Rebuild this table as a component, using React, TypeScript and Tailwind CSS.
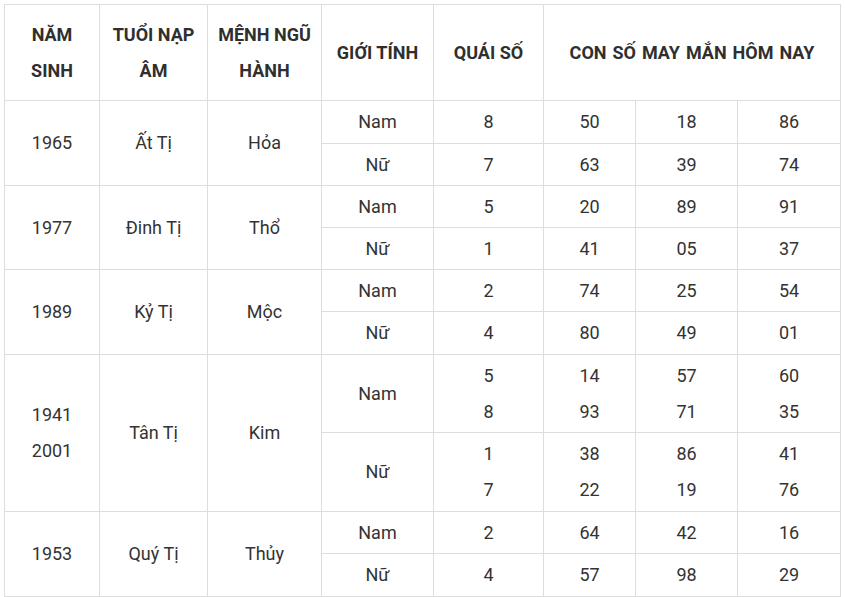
import React from "react";

type Sub = { g: string; q: string[]; n: string[][]; h: string };
type Row = { years: string[]; tuoi: string; menh: string; subs: Sub[] };

const rows: Row[] = [
  { years: ["1965"], tuoi: "Ất Tị", menh: "Hỏa", subs: [
    { g: "Nam", q: ["8"], n: [["50", "18", "86"]], h: "h-[43px]" },
    { g: "Nữ", q: ["7"], n: [["63", "39", "74"]], h: "h-[42px]" },
  ] },
  { years: ["1977"], tuoi: "Đinh Tị", menh: "Thổ", subs: [
    { g: "Nam", q: ["5"], n: [["20", "89", "91"]], h: "h-[42px]" },
    { g: "Nữ", q: ["1"], n: [["41", "05", "37"]], h: "h-[42px]" },
  ] },
  { years: ["1989"], tuoi: "Kỷ Tị", menh: "Mộc", subs: [
    { g: "Nam", q: ["2"], n: [["74", "25", "54"]], h: "h-[42px]" },
    { g: "Nữ", q: ["4"], n: [["80", "49", "01"]], h: "h-[43px]" },
  ] },
  { years: ["1941", "2001"], tuoi: "Tân Tị", menh: "Kim", subs: [
    { g: "Nam", q: ["5", "8"], n: [["14", "57", "60"], ["93", "71", "35"]], h: "h-[78px]" },
    { g: "Nữ", q: ["1", "7"], n: [["38", "86", "41"], ["22", "19", "76"]], h: "h-[79px]" },
  ] },
  { years: ["1953"], tuoi: "Quý Tị", menh: "Thủy", subs: [
    { g: "Nam", q: ["2"], n: [["64", "42", "16"]], h: "h-[42px]" },
    { g: "Nữ", q: ["4"], n: [["57", "98", "29"]], h: "h-[43px]" },
  ] },
];

const cell = "border border-[#dddddd] text-center align-middle p-0";

function Lines({ items }: { items: string[] }) {
  return (
    <>
      {items.map((t, i) => (
        <div key={i}>{t}</div>
      ))}
    </>
  );
}

export default function App() {
  return (
    <div
      className="bg-white w-[845px] h-[597px] pl-[4px] pt-[4px] text-[#333333]"
      style={{ fontFamily: "Roboto, 'Noto Sans', sans-serif" }}
    >
      <table className="border-collapse table-fixed w-[836px] text-[18px] leading-[36px]">
        <colgroup>
          <col className="w-[95px]" />
          <col className="w-[108px]" />
          <col className="w-[114px]" />
          <col className="w-[112px]" />
          <col className="w-[110px]" />
          <col className="w-[92px]" />
          <col className="w-[102px]" />
          <col className="w-[103px]" />
        </colgroup>
        <thead>
          <tr className="h-[96px] font-bold text-[#2f2f2f]">
            <th className={cell}>NĂM<br />SINH</th>
            <th className={cell}>TUỔI NẠP<br />ÂM</th>
            <th className={cell}>MỆNH NGŨ<br />HÀNH</th>
            <th className={cell}>GIỚI TÍNH</th>
            <th className={cell}>QUÁI SỐ</th>
            <th className={`${cell} [word-spacing:1.5px]`} colSpan={3}>CON SỐ MAY MẮN HÔM NAY</th>
          </tr>
        </thead>
        <tbody>
          {rows.map((r, ri) =>
            r.subs.map((s, si) => (
              <tr key={`${ri}-${si}`} className={s.h}>
                {si === 0 && (
                  <>
                    <td className={cell} rowSpan={2}><Lines items={r.years} /></td>
                    <td className={cell} rowSpan={2}>{r.tuoi}</td>
                    <td className={cell} rowSpan={2}>{r.menh}</td>
                  </>
                )}
                <td className={cell}>{s.g}</td>
                <td className={cell}><Lines items={s.q} /></td>
                {[0, 1, 2].map((c) => (
                  <td key={c} className={cell}>
                    <Lines items={s.n.map((line) => line[c])} />
                  </td>
                ))}
              </tr>
            ))
          )}
        </tbody>
      </table>
    </div>
  );
}
